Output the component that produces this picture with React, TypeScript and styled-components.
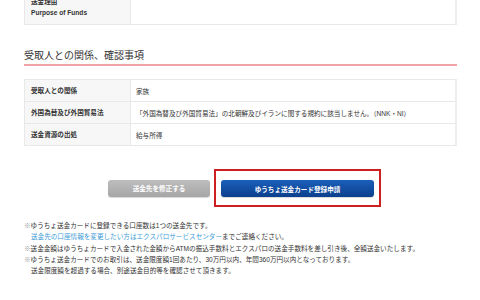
import styled, { createGlobalStyle } from "styled-components";

const GlobalStyle = createGlobalStyle`
  body {
    margin: 0;
    background: #fff;
    font-family: "Liberation Sans", "Noto Sans CJK JP", sans-serif;
    color: #333;
  }
`;

export const Page = styled.div`
  width: 433px;
  padding-left: 24px;
  overflow: hidden;
`;

export const Table = styled.div<{ $top?: boolean }>`
  display: grid;
  grid-template-columns: 106px 1fr;
  border: 1px solid #e8e8e8;
  border-right: 2px solid #eeeeee;
  border-top: ${(p) => (p.$top ? "none" : "1px solid #e8e8e8")};
  margin-top: ${(p) => (p.$top ? "-10px" : "0")};
`;

export const Label = styled.div<{ $last?: boolean }>`
  background: #f7f7f7;
  border-right: 1px solid #e8e8e8;
  border-bottom: ${(p) => (p.$last ? "none" : "1px solid #e8e8e8")};
  padding: 0 6px;
  font-size: 6.6px;
  font-weight: bold;
  display: flex;
  flex-direction: column;
  justify-content: center;
  min-height: 21px;
  line-height: 11px;
`;

export const Value = styled.div<{ $last?: boolean }>`
  border-bottom: ${(p) => (p.$last ? "none" : "1px solid #e8e8e8")};
  padding: 0 5px;
  font-size: 6.6px;
  display: flex;
  align-items: center;
  min-height: 21px;
`;

export const TallLabel = styled(Label)`
  padding: 6px 6px;
`;

export const Heading = styled.h2`
  margin: 24px 0 0;
  font-size: 10px;
  font-weight: normal;
  line-height: 14px;
  padding-bottom: 1px;
  border-bottom: 2px solid #eea4a4;
  margin-bottom: 13px;
`;

export const ButtonRow = styled.div`
  display: flex;
  justify-content: center;
  align-items: center;
  gap: 4px;
  margin-top: 23px;
  padding-left: 8px;
`;

export const Button = styled.button<{ $primary?: boolean }>`
  border: none;
  border-radius: 3px;
  height: 17px;
  width: ${(p) => (p.$primary ? "153px" : "102px")};
  font-family: inherit;
  font-size: 6.6px;
  font-weight: bold;
  color: #fff;
  background: ${(p) =>
    p.$primary
      ? "linear-gradient(#1a5fba, #0c3f8c)"
      : "linear-gradient(#bdbdbd, #a6a6a6)"};
  box-shadow: 0 1px 1px rgba(0, 0, 0, 0.15);
  padding: 0;
`;

export const Highlight = styled.div`
  border: 2px solid #cc1f1f;
  padding: 9px 5px 8px;
  display: flex;
`;

export const Notes = styled.div`
  margin-top: 13px;
  font-size: 6.6px;
  line-height: 11.3px;
`;

export const Note = styled.div<{ $indent?: boolean }>`
  padding-left: ${(p) => (p.$indent ? "7px" : "0")};
  white-space: nowrap;
`;

export const Mark = styled.span`
  color: #999;
`;

export const Link = styled.span`
  color: #3d9bd6;
`;

export default function App() {
  return (
    <Page>
      <GlobalStyle />
      <Table $top>
        <TallLabel $last>
          <div>送金理由</div>
          <div>Purpose of Funds</div>
        </TallLabel>
        <Value $last />
      </Table>

      <Heading>受取人との関係、確認事項</Heading>

      <Table>
        <Label>受取人との関係</Label>
        <Value>家族</Value>
        <Label>外国為替及び外国貿易法</Label>
        <Value>
          「外国為替及び外国貿易法」の北朝鮮及びイランに関する規約に該当しません。（NNK・NI）
        </Value>
        <Label $last>送金資源の出処</Label>
        <Value $last>給与所得</Value>
      </Table>

      <ButtonRow>
        <Button>送金先を修正する</Button>
        <Highlight>
          <Button $primary>ゆうちょ送金カード登録申請</Button>
        </Highlight>
      </ButtonRow>

      <Notes>
        <Note>
          <Mark>※</Mark>ゆうちょ送金カードに登録できる口座数は1つの送金先です。
        </Note>
        <Note $indent>
          <Link>送金先の口座情報を変更したい方はエクスパロサービスセンター</Link>
          までご連絡ください。
        </Note>
        <Note>
          <Mark>※</Mark>
          送金金額はゆうちょカードで入金された金額からATMの振込手数料とエクスパロの送金手数料を差し引き後、全額送金いたします。
        </Note>
        <Note>
          <Mark>※</Mark>
          ゆうちょ送金カードでのお取引は、送金限度額1回あたり、30万円以内、年間360万円以内となっております。
        </Note>
        <Note $indent>
          送金限度額を超過する場合、別途送金目的等を確認させて頂きます。
        </Note>
      </Notes>
    </Page>
  );
}
